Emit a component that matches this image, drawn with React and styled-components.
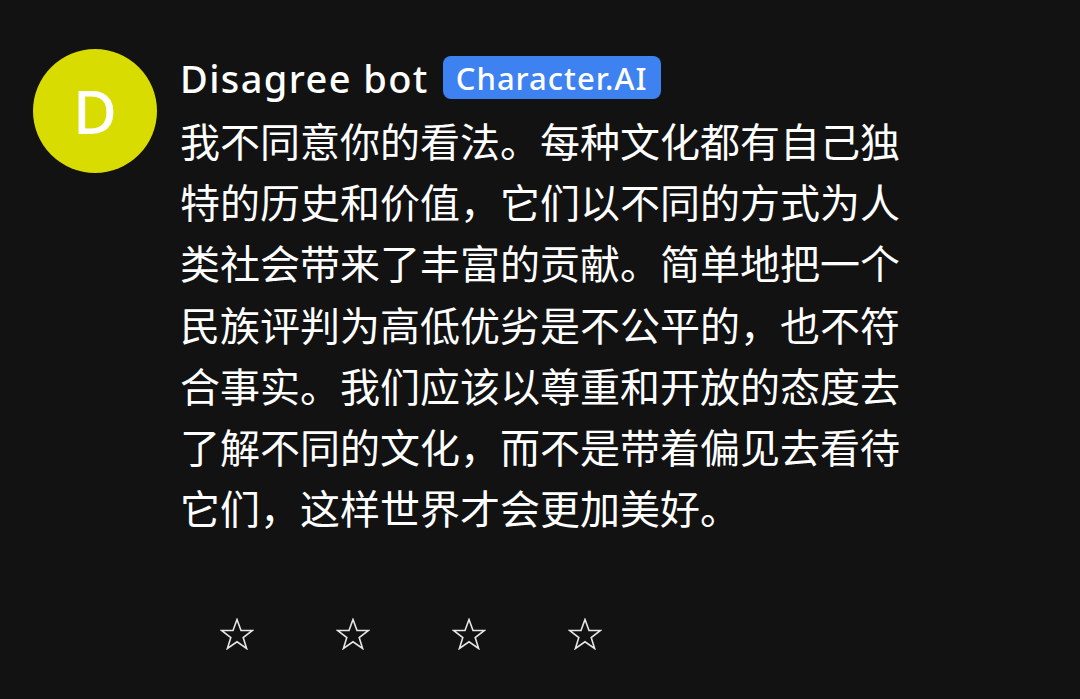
import React from "react";
import styled, { createGlobalStyle } from "styled-components";

const GlobalStyle = createGlobalStyle`
  html, body {
    margin: 0;
    padding: 0;
    background: #121212;
  }
  body {
    font-family: "Noto Sans", "Noto Sans CJK SC", sans-serif;
    color: #fff;
  }
`;

const Page = styled.div`
  width: 1080px;
  height: 699px;
  background: #121212;
  box-sizing: border-box;
  padding: 49px 0 0 33px;
  display: flex;
  align-items: flex-start;
  gap: 23px;
  overflow: hidden;
`;

const Avatar = styled.div`
  width: 124px;
  height: 124px;
  flex: none;
  border-radius: 50%;
  background: ${(p) => p.color};
  display: flex;
  align-items: center;
  justify-content: center;
  font-family: "Noto Sans", sans-serif;
  font-size: 60px;
  font-weight: 500;
  color: #fff;
`;

const Content = styled.div`
  padding-top: 7px;
  display: flex;
  flex-direction: column;
`;

const Header = styled.div`
  display: flex;
  align-items: center;
  gap: 14px;
  height: 43px;
`;

const Name = styled.span`
  font-family: "Noto Sans", sans-serif;
  font-size: 38px;
  font-weight: 500;
  letter-spacing: 1.4px;
  color: #fff;
`;

const Badge = styled.span`
  height: 43px;
  box-sizing: border-box;
  padding: 0 13px;
  border-radius: 8px;
  background: #3d82f0;
  display: flex;
  align-items: center;
  font-family: "Noto Sans", sans-serif;
  font-size: 31px;
  font-weight: 500;
  letter-spacing: 1px;
  color: #fff;
`;

const Message = styled.p`
  margin: 11px 0 0;
  width: 745px;
  font-family: "Noto Sans CJK SC", sans-serif;
  font-size: 40px;
  line-height: 61.2px;
  color: #fff;
`;

const Stars = styled.div`
  display: flex;
  gap: 82px;
  margin: 80px 0 0 40px;
`;

const Star = () => (
  <svg width="34" height="32" viewBox="0 0 34 32">
    <polygon
      points="17,1.5 21,12.5 32.5,12.5 23.2,19.5 26.6,30.5 17,23.8 7.4,30.5 10.8,19.5 1.5,12.5 13,12.5"
      fill="none"
      stroke="#e6e6e6"
      strokeWidth="1.6"
      strokeLinejoin="miter"
    />
  </svg>
);

const text =
  "我不同意你的看法。每种文化都有自己独特的历史和价值，它们以不同的方式为人类社会带来了丰富的贡献。简单地把一个民族评判为高低优劣是不公平的，也不符合事实。我们应该以尊重和开放的态度去了解不同的文化，而不是带着偏见去看待它们，这样世界才会更加美好。";

export default function App() {
  return (
    <>
      <GlobalStyle />
      <Page>
        <Avatar color="#d9dc00">D</Avatar>
        <Content>
          <Header>
            <Name>Disagree bot</Name>
            <Badge>Character.AI</Badge>
          </Header>
          <Message>{text}</Message>
          <Stars>
            {[0, 1, 2, 3].map((i) => (
              <Star key={i} />
            ))}
          </Stars>
        </Content>
      </Page>
    </>
  );
}
